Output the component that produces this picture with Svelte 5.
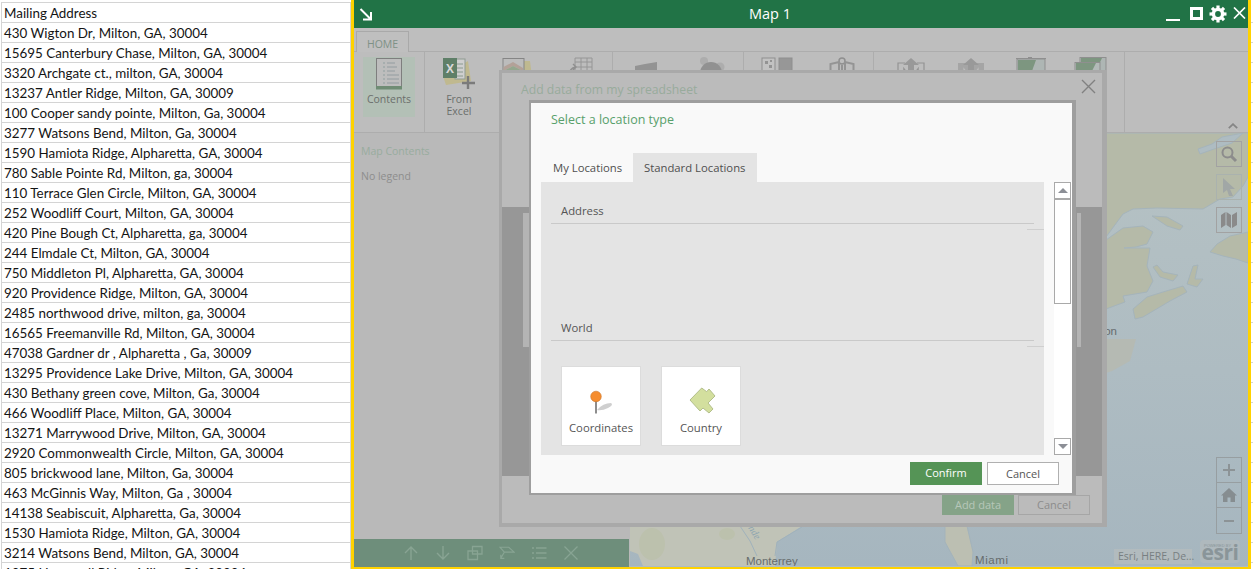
<script>
  const addresses = [
    "Mailing Address",
    "430 Wigton Dr, Milton, GA, 30004",
    "15695 Canterbury Chase, Milton, GA, 30004",
    "3320 Archgate ct., milton, GA, 30004",
    "13237 Antler Ridge, Milton, GA, 30009",
    "100 Cooper sandy pointe, Milton, Ga, 30004",
    "3277 Watsons Bend, Milton, Ga, 30004",
    "1590 Hamiota Ridge, Alpharetta, GA, 30004",
    "780 Sable Pointe Rd, Milton, ga, 30004",
    "110 Terrace Glen Circle, Milton, GA, 30004",
    "252 Woodliff Court, Milton, GA, 30004",
    "420 Pine Bough Ct, Alpharetta, ga, 30004",
    "244 Elmdale Ct, Milton, GA, 30004",
    "750 Middleton Pl, Alpharetta, GA, 30004",
    "920 Providence Ridge, Milton, GA, 30004",
    "2485 northwood drive, milton, ga, 30004",
    "16565 Freemanville Rd, Milton, GA, 30004",
    "47038 Gardner dr , Alpharetta , Ga, 30009",
    "13295 Providence Lake Drive, Milton, GA, 30004",
    "430 Bethany green cove, Milton, Ga, 30004",
    "466 Woodliff Place, Milton, GA, 30004",
    "13271 Marrywood Drive, Milton, GA, 30004",
    "2920 Commonwealth Circle, Milton, GA, 30004",
    "805 brickwood lane, Milton, Ga, 30004",
    "463 McGinnis Way, Milton, Ga , 30004",
    "14138 Seabiscuit, Alpharetta, Ga, 30004",
    "1530 Hamiota Ridge, Milton, GA, 30004",
    "3214 Watsons Bend, Milton, GA, 30004",
    "1075 Hopewell Ridge, Milton, GA, 30004"
  ];
  const gearAngles = [0, 45, 90, 135, 180, 225, 270, 315];
</script>

<div class="page">
  <div class="sheet">
    {#each addresses as a}
      <div class="row">{a}</div>
    {/each}
  </div>

  <div class="pane">
    <header class="bar">
      <svg class="h-arrow" width="14" height="13" viewBox="0 0 14 13">
        <path d="M1.5 1 L11.5 11 M12 4 V11.5 H4" fill="none" stroke="#fff" stroke-width="2"/>
      </svg>
      <span class="map-title">Map 1</span>
      <span class="win-min"></span>
      <span class="win-max"></span>
      <svg class="win-gear" width="18" height="18" viewBox="-9 -9 18 18">
        {#each gearAngles as g}
          <rect x="-1.6" y="-8.5" width="3.2" height="4" fill="#fff" transform="rotate({g})"/>
        {/each}
        <circle r="4.6" fill="none" stroke="#fff" stroke-width="3.4"/>
      </svg>
      <svg class="win-close" width="13" height="12" viewBox="0 0 13 12">
        <path d="M1 .5 L12 11.5 M12 .5 L1 11.5" stroke="#fff" stroke-width="1.7"/>
      </svg>
    </header>

    <div class="tabstrip"><span class="home">HOME</span></div>

    <div class="ribbon">
      <div class="group g1">
        <div class="rbtn active w52">
          <svg width="28" height="33" viewBox="0 0 28 33">
            <rect x="1.5" y="1.5" width="25" height="30" fill="#bdbdbd" stroke="#7e7e7e"/>
            <rect x="1" y="29" width="26" height="3.5" fill="#6f8c74"/>
            <path d="M8 6h2M8 10h2M8 14h2M8 18h2M8 22h2M8 26h2" stroke="#8f9f9f" stroke-width="1"/>
            <path d="M12 6h8M12 10h10M12 14h8M12 18h12M12 22h12M12 26h12" stroke="#939ca0" stroke-width="1"/>
          </svg>
          <span class="rlabel">Contents</span>
        </div>
      </div>
      <div class="group g2">
        <div class="rbtn w58">
          <svg width="34" height="33" viewBox="0 0 34 33">
            <path d="M1 19 L26 4 L29 24 L4 28 Z" fill="#c0b98f"/>
            <rect x="13" y="2" width="10" height="20" fill="#cfcfcf" stroke="#8f9b92"/>
            <path d="M15 7h6M15 11h6M15 15h6M15 19h6" stroke="#8a9a8f"/>
            <rect x="1" y="1" width="14" height="20" fill="#5f7f68"/>
            <text class="xl" x="8" y="15.5" text-anchor="middle">X</text>
            <path d="M26 19 V32 M20 26 H33" stroke="#7b7b7b" stroke-width="2.4"/>
          </svg>
          <span class="rlabel">From<br/>Excel</span>
        </div>
        <div class="rbtn w58">
          <svg width="30" height="33" viewBox="0 0 30 33">
            <path d="M20 4 H28 L30 20 H20 Z" fill="#bfb990"/>
            <rect x="1" y="1.5" width="21" height="20" fill="#bcbcbc" stroke="#858585"/>
            <path d="M1.5 10 L11 5 L21 11 V14 L11 9 L1.5 14 Z" fill="#b3a198"/>
            <path d="M1.5 14 L11 9 L21 14 V17 H1.5 Z" fill="#94a78e"/>
            <path d="M1.5 17 H21 V21 H1.5 Z" fill="#98a7b4"/>
          </svg>
        </div>
        <div class="rbtn w67">
          <svg width="26" height="33" viewBox="0 0 26 33">
            <path d="M8 1h17v18H8z M8 5h17 M8 10h17 M8 15h17 M14 1v18 M20 1v18" fill="none" stroke="#969696"/>
            <path d="M1 20 Q2 11 9 10 M6 7 l3 3 -3 3" fill="none" stroke="#8f8f8f" stroke-width="1.4"/>
          </svg>
        </div>
      </div>
      <div class="group g3">
        <div class="rbtn w65">
          <svg width="26" height="33" viewBox="0 0 26 33">
            <path d="M2 9 L12 7 L24 5 L24 24 L2 24 Z" fill="#939393"/>
          </svg>
        </div>
        <div class="rbtn w65">
          <svg width="30" height="33" viewBox="0 0 30 33">
            <circle cx="24" cy="10" r="4.5" fill="#adadad"/>
            <circle cx="8" cy="4" r="4" fill="#adadad"/>
            <circle cx="15" cy="16" r="11" fill="#919191"/>
          </svg>
        </div>
      </div>
      <div class="group g4">
        <div class="rbtn w65">
          <svg width="32" height="33" viewBox="0 0 32 33">
            <rect x="1" y="1" width="13" height="13" fill="#c2c2c2" stroke="#8f8f8f"/>
            <rect x="18" y="1" width="13" height="13" fill="#979797" stroke="#8f8f8f"/>
            <path d="M4 4h3v3h-3z M8 8h3v3h-3z M9 3h2v2h-2z" fill="#939393"/>
          </svg>
        </div>
        <div class="rbtn w65">
          <svg width="26" height="33" viewBox="0 0 26 33">
            <circle cx="13" cy="4" r="3" fill="none" stroke="#8f8f8f" stroke-width="1.5"/>
            <path d="M1.5 22 V7 L10 5 V22 M16 22 V5 L24.5 7 V22" fill="none" stroke="#949494" stroke-width="2"/>
            <path d="M13 8 V22" stroke="#949494" stroke-width="2"/>
          </svg>
        </div>
      </div>
      <div class="group g5">
        <div class="rbtn w60">
          <svg width="28" height="33" viewBox="0 0 28 33">
            <path d="M1 22 V6 H8 M20 6 H27 V22" fill="none" stroke="#939393" stroke-width="1.2"/>
            <path d="M14 1 L22 8 H17 V22 H11 V8 H6 Z" fill="#999"/>
            <path d="M7 22 V12 L10 16 M21 22 V12 L18 16" fill="none" stroke="#939393" stroke-width="1.5"/>
          </svg>
        </div>
        <div class="rbtn w60">
          <svg width="28" height="33" viewBox="0 0 28 33">
            <rect x="1" y="6" width="26" height="16" fill="#a5a5a5"/>
            <path d="M14 1 L22 8 H17 V22 H11 V8 H6 Z" fill="#999"/>
            <path d="M7 22 V12 L10 16 M21 22 V12 L18 16" fill="none" stroke="#bdbdbd" stroke-width="1.2"/>
          </svg>
        </div>
        <div class="rbtn w60">
          <svg width="32" height="33" viewBox="0 0 32 33">
            <path d="M1 1.5 H31" stroke="#8f8f8f"/>
            <rect x="13" y="0" width="4" height="2" fill="#8f8f8f"/>
            <rect x="2" y="2" width="28" height="24" fill="#aeb6b4" stroke="#8f8f8f"/>
            <path d="M3 3 H21 L17 14 L11 22 H3 Z" fill="#7d9680"/>
          </svg>
        </div>
        <div class="rbtn w60">
          <svg width="34" height="33" viewBox="0 0 34 33">
            <rect x="6" y="0.5" width="26" height="26" fill="#aeb6b4" stroke="#8f8f8f"/>
            <path d="M7 1 H28 L22 14 H7 Z" fill="#7d9680"/>
            <rect x="1" y="5.5" width="25" height="24" fill="#b2bab8" stroke="#8f8f8f"/>
            <path d="M2 6 H22 L17 16 H2 Z" fill="#7d9680"/>
          </svg>
        </div>
      </div>
      <svg class="chev" width="10" height="6" viewBox="0 0 10 6">
        <path d="M.8 5.2 L5 1.2 L9.2 5.2" fill="none" stroke="#858585" stroke-width="1.8"/>
      </svg>
    </div>

    <div class="body">
      <aside class="side">
        <div class="side-main">
          <div class="side-title">Map Contents</div>
          <div class="side-empty">No legend</div>
        </div>
        <div class="tools">
          <svg width="16" height="16" viewBox="0 0 16 16"><path d="M8 15 V2 M2 8 L8 2 L14 8" fill="none" stroke="#88a493" stroke-width="1.4"/></svg>
          <svg width="16" height="16" viewBox="0 0 16 16"><path d="M8 1 V14 M2 8 L8 14 L14 8" fill="none" stroke="#88a493" stroke-width="1.4"/></svg>
          <svg width="16" height="16" viewBox="0 0 16 16"><path d="M5.5 1.5 H15 V9 H5.5 Z M1 6 H10.5 V14.5 H1 Z" fill="none" stroke="#88a493" stroke-width="1.3"/></svg>
          <svg width="16" height="16" viewBox="0 0 18 16"><path d="M1 1.5 H11 L17 7 H6 Z M6 7 L2 14 M2 10 V14 H6" fill="none" stroke="#88a493" stroke-width="1.3"/></svg>
          <svg width="16" height="16" viewBox="0 0 16 16"><path d="M1 3 H3 M5 3 H15.5 M1 8 H3 M5 8 H15.5 M1 13 H3 M5 13 H15.5" stroke="#88a493" stroke-width="1.5"/></svg>
          <svg width="16" height="16" viewBox="0 0 16 16"><path d="M1.5 1.5 L14.5 14.5 M14.5 1.5 L1.5 14.5" stroke="#88a493" stroke-width="1.3"/></svg>
        </div>
      </aside>

      <div class="map">
        <svg class="map-art" width="618" height="433" viewBox="630 134 618 433">
          <defs>
            <linearGradient id="sea" x1="0" y1="0" x2="0" y2="1">
              <stop offset="0" stop-color="#b6c2c4"/>
              <stop offset="0.55" stop-color="#aebcc2"/>
              <stop offset="1" stop-color="#a6b6bf"/>
            </linearGradient>
          </defs>
          <rect x="630" y="134" width="618" height="433" fill="url(#sea)"/>
          <path class="coast" d="M1106 134 H1248 V178 L1243 187 L1233 198 L1220 200 L1203 210 L1157 209 L1133 210 L1123 215 L1106 238 Z"/>
          <path class="lake" d="M1198 150 L1212 145 L1222 138 L1243 134 L1232 144 L1214 150 L1200 155 Z"/>
          <path class="coast" d="M1106 241 L1123 229 L1143 227 L1153 233 L1147 245 L1136 248 L1124 249 L1150 249 L1147 267 L1153 282 L1147 293 L1123 297 L1125 303 L1106 310 Z"/>
          <path class="coast" d="M1133 310 L1147 298 L1163 293 L1183 287 L1187 293 L1170 302 L1143 318 L1135 320 Z"/>
          <path class="coast" d="M1187 285 L1193 267 L1198 266 L1195 280 L1203 280 L1197 288 Z"/>
          <path class="coast" d="M1153 268 L1157 266 L1163 273 L1178 276 L1173 282 L1160 278 Z"/>
          <path class="coast" d="M1152 217 L1167 218 L1183 227 L1180 231 L1167 227 Z"/>
          <path class="coast" d="M1210 253 L1217 245 L1230 237 L1248 233 V264 L1236 260 L1223 257 Z"/>
          <path d="M1106 340 H1136 L1130 362 L1112 372 L1106 374 Z" fill="#b5bab3"/>
          <path d="M630 527 H802 L777 543 L775 567 H643 L638 555 L630 552 Z" fill="#c0c3b7"/>
          <ellipse cx="652" cy="545" rx="13" ry="16" fill="#bcc1ad"/>
          <ellipse cx="727" cy="535" rx="8" ry="6" fill="#bcc1ad"/>
          <path d="M740 527 L750 542 L757 557 M802 528 L777 543 L775 557" fill="none" stroke="#a0b2bc" stroke-width="1"/>
          <text class="river" transform="translate(748 529) rotate(58)">nde</text>
          <path d="M945 527 H967 L973 553 L972 567 H958 L945 543 Z" fill="#bcbfb2" stroke="#a3b3bb"/>
          <text class="place" x="1117" y="336" text-anchor="end">Boston</text>
          <text class="place" x="746" y="566">Monterrey</text>
          <text class="place miami" x="975" y="565">Miami</text>
        </svg>

        <div class="map-tools">
          <div class="mbtn">
            <svg width="18" height="18" viewBox="0 0 18 18"><circle cx="7.5" cy="7.5" r="5" fill="none" stroke="#8c8c8c" stroke-width="2"/><path d="M11 11 L16 16" stroke="#8c8c8c" stroke-width="3"/></svg>
          </div>
          <div class="mbtn faint">
            <svg width="18" height="20" viewBox="0 0 18 20"><path d="M3 1 L15 12 H10 L13 19 H9 L7 13 L3 16 Z" fill="#a1a7a6"/></svg>
          </div>
          <div class="mbtn">
            <svg width="18" height="18" viewBox="0 0 18 18"><path d="M1 4 L5.5 1 V14 L1 17 Z M6.5 1 L11 4 V17 L6.5 14 Z M12 4 L17 1 V14 L12 17 Z" fill="#8a8a8a"/></svg>
          </div>
        </div>

        <div class="zoom-tools">
          <div class="zbtn"><svg width="14" height="14" viewBox="0 0 14 14"><path d="M7 1 V13 M1 7 H13" stroke="#8c9396" stroke-width="2"/></svg></div>
          <div class="zbtn"><svg width="16" height="16" viewBox="0 0 16 16"><path d="M8 1 L16 8.5 H14 V15 H9.5 V10.5 H6.5 V15 H2 V8.5 H0 Z" fill="#868d90"/></svg></div>
          <div class="zbtn last"><svg width="14" height="14" viewBox="0 0 14 14"><path d="M2 7 H12" stroke="#8c9396" stroke-width="2"/></svg></div>
        </div>

        <div class="attrib">Esri, HERE, De...</div>
        <svg class="esri" width="40" height="23" viewBox="0 0 40 23">
          <rect width="40" height="23" rx="4" fill="#afb9bd"/>
          <text class="powered" x="4" y="6.5">POWERED BY</text>
          <text class="esri-word" x="20" y="20" text-anchor="middle">esri</text>
        </svg>
      </div>
    </div>

    <section class="dialog">
      <div class="dlg-title">Add data from my spreadsheet</div>
      <svg class="dlg-close" width="15" height="15" viewBox="0 0 15 15"><path d="M1 1 L14 14 M14 1 L1 14" stroke="#818181" stroke-width="1.4"/></svg>
      <div class="dlg-dark">
        <span class="strip left"></span>
        <span class="strip right"></span>
      </div>
      <div class="dlg-foot">
        <span class="dbtn add">Add data</span>
        <span class="dbtn cancel">Cancel</span>
      </div>
    </section>

    <section class="modal">
      <div class="modal-title">Select a location type</div>
      <div class="tabs">
        <span class="tab on">My Locations</span>
        <span class="tab">Standard Locations</span>
      </div>
      <div class="content">
        <div class="panel">
          <div class="sec">Address</div>
          <div class="sec second">World</div>
          <div class="cards">
            <div class="card">
              <svg width="40" height="36" viewBox="581 381 40 36">
                <path d="M597 410 Q603 403 611 403 Q614 405 608 408 Q602 411 597 410 Z" fill="#cfcfcf"/>
                <path d="M596 396 V413.5" stroke="#8d8d8d" stroke-width="2"/>
                <circle cx="596" cy="396.5" r="5.3" fill="#f58d2f" stroke="#c9762b" stroke-width=".6"/>
              </svg>
              <span class="card-label">Coordinates</span>
            </div>
            <div class="card">
              <svg width="40" height="36" viewBox="681 381 40 36">
                <path d="M690 400 L701.7 388 L706.7 391.7 L709 389 L715 396 L708 403 L713 409 L709 413 L703 408 L700 411 Z" fill="#d3df9e" stroke="#b3bf8b"/>
              </svg>
              <span class="card-label">Country</span>
            </div>
          </div>
        </div>
        <div class="scroll">
          <div class="sbtn"><span class="tri up"></span></div>
          <div class="thumb"></div>
          <div class="sbtn end"><span class="tri down"></span></div>
        </div>
      </div>
      <div class="modal-foot">
        <span class="mfbtn confirm">Confirm</span>
        <span class="mfbtn plain">Cancel</span>
      </div>
    </section>
  </div>
</div>

<style>
  :global(body) { margin: 0; background: #fff; }
  .page {
    width: 1253px; height: 569px; display: flex; overflow: hidden;
    background: repeating-linear-gradient(to bottom, #fff 0 19px, #d4d4d4 19px 20px) 0 3px;
    font-family: "Open Sans", "Noto Sans", sans-serif;
  }

  .sheet {
    width: 351px; height: 569px; flex: none; box-sizing: border-box; padding: 2px 0 0 1px; overflow: hidden; background: #fff;
  }
  .row {
    box-sizing: border-box; width: 350px; height: 20px; padding-left: 2px;
    border-left: 1px solid #d4d4d4; border-right: 1px solid #d4d4d4; border-bottom: 1px solid #d4d4d4;
    font: 13.4px/21px "Lato", sans-serif; color: #141414; white-space: nowrap; overflow: hidden;
  }
  .row:first-child { height: 21px; border-top: 1px solid #d4d4d4; }

  .pane {
    position: relative; box-sizing: border-box; width: 900px; height: 569px; flex: none;
    margin-right: 2px;
    border-left: 3px solid #ffd200; border-right: 3px solid #ffd200; border-bottom: 2px solid #ffd200;
    display: flex; flex-direction: column; background: #bdbdbd;
  }

  .bar { height: 28px; flex: none; background: #217346; display: flex; align-items: center; color: #fff; }
  .h-arrow { margin-left: 5px; }
  .map-title { margin-left: 376px; font-size: 14.5px; line-height: 28px; width: 41px; white-space: nowrap; }
  .win-min { margin-left: 376px; width: 14px; height: 2px; background: #fff; align-self: flex-end; margin-bottom: 7px; }
  .win-max { margin-left: 10px; width: 13px; height: 13px; box-sizing: border-box; border: 3px solid #fff; margin-top: -1px; }
  .win-gear { margin-left: 6px; }
  .win-close { margin-left: 6px; margin-top: -3px; }

  .tabstrip {
    height: 24px; flex: none; box-sizing: border-box; padding: 3px 0 0 2px;
    background: #bebebe; border-bottom: 1px solid #adadad; display: flex;
  }
  .home {
    box-sizing: border-box; width: 53px; height: 22px; text-align: center; font-size: 10.5px; line-height: 24px;
    color: #7e9186; border: 1px solid #a9a9a9; border-bottom: none; background: #bfbfbf;
  }

  .ribbon {
    position: relative; height: 81px; flex: none; display: flex; box-sizing: border-box;
    background: #bdbdbd; border-bottom: 1px solid #adadad;
  }
  .group { display: flex; height: 80px; box-sizing: border-box; border-right: 1px solid #adadad; padding-top: 5px; }
  .g1 { width: 71px; padding-left: 9px; }
  .g2 { width: 188px; padding-left: 5px; }
  .g3 { width: 131px; }
  .g4 { width: 130px; }
  .g5 { width: 251px; padding-left: 7px; }
  .rbtn { height: 60px; flex: none; display: flex; flex-direction: column; align-items: center; }
  .rbtn svg { flex: none; }
  .active { background: #b3c0b6; }
  .w52 { width: 52px; }
  .w58 { width: 58px; }
  .w60 { width: 60px; }
  .w65 { width: 65px; }
  .w67 { width: 67px; }
  .rlabel { font-size: 10.5px; line-height: 12px; color: #6b6f6c; text-align: center; margin-top: 3px; }
  .xl { font: bold 12px "Open Sans", sans-serif; fill: #d8d8d8; }
  .chev { position: absolute; right: 10px; bottom: 3px; }

  .body { flex: 1; min-height: 0; display: flex; }
  .side { width: 276px; flex: none; display: flex; flex-direction: column; background: #b9b9b9; }
  .side-main { flex: 1; padding: 10px 0 0 7px; }
  .side-title { font-size: 10.5px; line-height: 16px; color: #98ac9e; }
  .side-empty { font-size: 10.5px; line-height: 16px; margin-top: 9px; color: #8d8d8d; }
  .tools {
    height: 28px; box-sizing: border-box; margin-right: 1px; background: #6e8e7b;
    display: flex; align-items: center; padding-left: 49px; gap: 16px;
  }

  .map { position: relative; flex: 1; overflow: hidden; background: #aebcc2; }
  .map-art { display: block; }
  .coast { fill: #b5baa8; stroke: #a5b4bb; stroke-width: 1; }
  .lake { fill: #aebcc2; stroke: #a5b4bb; }
  .place { font: 11.5px "Liberation Sans", sans-serif; fill: #666c6d; }
  .miami { letter-spacing: .6px; }
  .river { font: italic 10px "Liberation Serif", serif; fill: #8ba4b0; }

  .map-tools { position: absolute; right: 6px; top: 8px; display: flex; flex-direction: column; gap: 7px; }
  .mbtn {
    width: 26px; height: 26px; box-sizing: border-box; border: 1px solid #a2a2a2;
    display: flex; align-items: center; justify-content: center;
  }
  .mbtn.faint { border-color: #aab2ae; }
  .zoom-tools {
    position: absolute; right: 6px; top: 324px; width: 26px; box-sizing: border-box;
    border: 1px solid #979ea1; display: flex; flex-direction: column;
  }
  .zbtn { height: 25px; box-sizing: border-box; border-bottom: 1px solid #979ea1; display: flex; align-items: center; justify-content: center; }
  .zbtn.last { border-bottom: none; }
  .attrib {
    position: absolute; left: 484px; top: 416px; width: 78px; height: 15px; box-sizing: border-box; padding-left: 4px;
    background: #b2bbbe; font: 10.5px/15px "Open Sans", sans-serif; color: #787f82; white-space: nowrap;
  }
  .esri { position: absolute; left: 570px; top: 407px; }
  .powered { font: 4px "Liberation Sans", sans-serif; fill: #8a9599; }
  .esri-word { font: bold 21px "Open Sans", sans-serif; fill: #8a9599; letter-spacing: -.5px; }

  .dialog {
    position: absolute; left: 148px; top: 73px; width: 600px; height: 450px; display: flex; flex-direction: column;
    background: #bbb;
    box-shadow: -3px -3px 0 #a9a9a9, 5px 4px 0 #a9a9a9, -3px 4px 0 #a9a9a9, 5px -3px 0 #a9a9a9;
  }
  .dlg-title { height: 134px; flex: none; box-sizing: border-box; padding: 8px 0 0 19px; font-size: 12.2px; line-height: 18px; color: #98ab9c; }
  .dlg-close { position: absolute; right: 6px; top: 6px; }
  .dlg-dark { position: relative; height: 269px; flex: none; background: #979797; }
  .strip { position: absolute; top: 6px; height: 134px; background: #b4b4b4; }
  .strip.left { left: 21px; width: 8px; }
  .strip.right { left: 575px; width: 4px; }
  .dlg-foot { flex: 1; display: flex; justify-content: flex-end; gap: 4px; padding: 19px 12px 0 0; align-items: flex-start; }
  .dbtn { box-sizing: border-box; width: 72px; height: 20px; text-align: center; font-size: 11px; line-height: 20px; }
  .add { background: #85a388; color: #b7c7b9; }
  .cancel { border: 1px solid #a6a6a6; color: #8c8c8c; line-height: 18px; }

  .modal {
    position: absolute; left: 177px; top: 103px; width: 541px; height: 390px; display: flex; flex-direction: column;
    background: #f9f9f9;
    box-shadow: -2px -3px 0 #9e9e9e, 4px 2px 0 #9e9e9e, -2px 2px 0 #9e9e9e, 4px -3px 0 #9e9e9e;
  }
  .modal-title { height: 50px; flex: none; box-sizing: border-box; padding: 7px 0 0 20px; font-size: 12.5px; line-height: 20px; color: #58a06b; }
  .tabs { height: 29px; flex: none; display: flex; padding-left: 10px; }
  .tab {
    box-sizing: border-box; height: 29px; padding: 0 11px; font-size: 11.3px; line-height: 29px; color: #4f4f4f;
    background: #e4e4e4; white-space: nowrap; width: 124px;
  }
  .tab.on { background: #f9f9f9; width: 92px; height: 28px; padding-left: 12px; }
  .content { height: 273px; flex: none; display: flex; padding-left: 10px; }
  .panel { width: 503px; flex: none; background: #e4e4e4; overflow: hidden; }
  .sec {
    position: relative; box-sizing: border-box; height: 22px; margin: 20px 10px 0; padding-left: 10px;
    border-bottom: 1px solid #c9c9c9; font-size: 11.3px; line-height: 18px; color: #555;
  }
  .sec::after {
    content: ""; position: absolute; right: -10px; bottom: -7px; width: 17px; height: 1px; background: #cfcfcf;
  }
  .sec.second { margin-top: 94px; height: 23px; line-height: 20px; }
  .cards { display: flex; gap: 20px; padding: 25px 0 0 20px; }
  .card {
    box-sizing: border-box; width: 80px; height: 80px; background: #fff; border: 1px solid #dcdcdc;
    display: flex; flex-direction: column; align-items: center; padding-top: 14px;
  }
  .card-label { font-size: 11.3px; line-height: 16px; margin-top: 3px; color: #555; white-space: nowrap; }
  .scroll {
    width: 18px; flex: none; margin-left: 10px; background: #fff; display: flex; flex-direction: column;
  }
  .sbtn {
    box-sizing: border-box; width: 17px; height: 17px; flex: none; background: #fff; border: 1px solid #a9a9a9;
    display: flex; align-items: center; justify-content: center;
  }
  .sbtn.end { margin-top: auto; }
  .thumb { box-sizing: border-box; width: 17px; height: 105px; border: 1px solid #a9a9a9; background: #fff; }
  .tri { width: 0; height: 0; border-left: 5px solid transparent; border-right: 5px solid transparent; }
  .tri.up { border-bottom: 5px solid #8c8f96; }
  .tri.down { border-top: 5px solid #8c8f96; }
  .modal-foot { flex: 1; display: flex; justify-content: flex-end; gap: 5px; padding: 7px 13px 0 0; align-items: flex-start; }
  .mfbtn { box-sizing: border-box; width: 72px; height: 23px; text-align: center; font-size: 11px; line-height: 22px; }
  .confirm { background: #559456; color: #fff; }
  .plain { background: #fff; border: 1px solid #b0b0b0; color: #555; line-height: 21px; }
</style>
